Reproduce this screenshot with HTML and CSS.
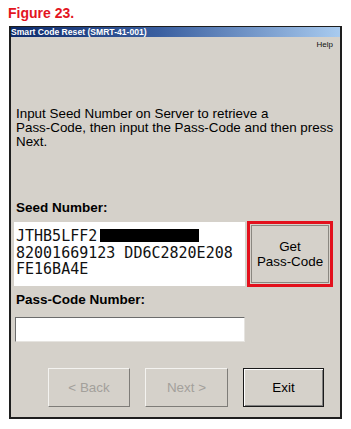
FILE: index.html
```html
<!DOCTYPE html>
<html>
<head>
<meta charset="utf-8">
<link rel="stylesheet" href="styles.css">
</head>
<body>
<div class="fig">Figure 23.</div>
<div class="window">
  <div class="titlebar">Smart Code Reset (SMRT-41-001)</div>
  <div class="menu"><span class="help">Help</span></div>
  <div class="content">
    <p class="instr">Input Seed Number on Server to retrieve a<br>Pass-Code, then input the Pass-Code and then press<br>Next.</p>
    <div class="label seed-label">Seed Number:</div>
    <div class="seed-row">
      <div class="seed-box">JTHB5LFF2<span class="redact"></span><br>82001669123 DD6C2820E208<br>FE16BA4E</div>
      <div class="highlight"><div class="btn get">Get<br>Pass-Code</div></div>
    </div>
    <div class="label pc-label">Pass-Code Number:</div>
    <div class="pc-input"></div>
    <div class="actions">
      <div class="btn nav disabled back">&lt; Back</div>
      <div class="btn nav disabled next">Next &gt;</div>
      <div class="btn nav exit">Exit</div>
    </div>
  </div>
</div>
</body>
</html>
```
FILE: styles.css
```css
html, body {
  margin: 0;
  padding: 0;
  background: #ffffff;
  font-family: "Liberation Sans", Arial, sans-serif;
}
.fig {
  color: #e3151f;
  font-weight: bold;
  font-size: 14px;
  line-height: 16px;
  padding: 5px 0 0 8px;
  height: 16px;
}
.window {
  margin: 5px 0 0 9px;
  width: 333px;
  height: 393px;
  box-sizing: border-box;
  border: 2px solid #1e1e1e;
  border-top-width: 1px;
  background: #d5d1ca;
  display: flex;
  flex-direction: column;
}
.titlebar {
  height: 10px;
  background: linear-gradient(to right, #0c2a6c 0%, #3a5fa0 45%, #a9cbef 100%);
  color: #ffffff;
  font-weight: bold;
  font-size: 8.6px;
  line-height: 10px;
  padding-left: 0;
  white-space: nowrap;
}
.menu {
  height: 14px;
  display: flex;
  justify-content: flex-end;
  align-items: center;
  padding-right: 7px;
}
.help {
  font-size: 8px;
  color: #111;
}
.content {
  padding-left: 3px;
  display: flex;
  flex-direction: column;
}
.instr {
  margin: 56px 0 0 0;
  padding-left: 2px;
  font-size: 13.4px;
  line-height: 14px;
  color: #000;
}
.label {
  font-weight: bold;
  font-size: 13.5px;
  line-height: 15px;
  padding-left: 2px;
  color: #000;
}
.seed-label {
  margin-top: 51px;
}
.seed-row {
  margin-top: 6px;
  display: flex;
  align-items: flex-start;
  gap: 2px;
}
.seed-box {
  margin-top: 1px;
  width: 231px;
  height: 64px;
  box-sizing: border-box;
  background: #ffffff;
  padding: 6px 0 0 2px;
  font-family: "DejaVu Sans Mono", monospace;
  font-size: 15px;
  line-height: 16.5px;
  color: #111;
  white-space: nowrap;
}
.redact {
  display: inline-block;
  width: 99px;
  height: 13px;
  background: #000;
  margin-left: 3px;
  vertical-align: -1px;
}
.highlight {
  width: 86px;
  height: 66px;
  box-sizing: border-box;
  border: 3px solid #e3101c;
  padding: 1px;
}
.btn {
  box-sizing: border-box;
  background: #d5d1ca;
  border-top: 1px solid #f4f3f0;
  border-left: 1px solid #f4f3f0;
  border-right: 1px solid #5a5a5a;
  border-bottom: 1px solid #5a5a5a;
  display: flex;
  align-items: center;
  justify-content: center;
  text-align: center;
  font-size: 13.4px;
  line-height: 15px;
  color: #000;
}
.get {
  width: 100%;
  height: 100%;
  border-color: #8a8780;
}
.pc-label {
  margin-top: 5px;
}
.pc-input {
  margin: 10px 0 0 1px;
  width: 230px;
  height: 25px;
  box-sizing: border-box;
  background: #ffffff;
  border-top: 1px solid #6c6c6c;
  border-left: 1px solid #6c6c6c;
  border-right: 1px solid #e6e4e0;
  border-bottom: 1px solid #e6e4e0;
}
.actions {
  margin-top: 26px;
  display: flex;
  gap: 15px;
  padding-left: 34px;
}
.nav {
  height: 39px;
}
.back { width: 82px; }
.next { width: 83px; }
.exit {
  width: 81px;
  border: 1px solid #1a1a1a;
  box-shadow: inset 1px 1px 0 #ffffff, inset -1px -1px 0 #808080;
}
.disabled {
  color: #a3a09b;
  border-right-color: #7e7c78;
  border-bottom-color: #7e7c78;
}
```
